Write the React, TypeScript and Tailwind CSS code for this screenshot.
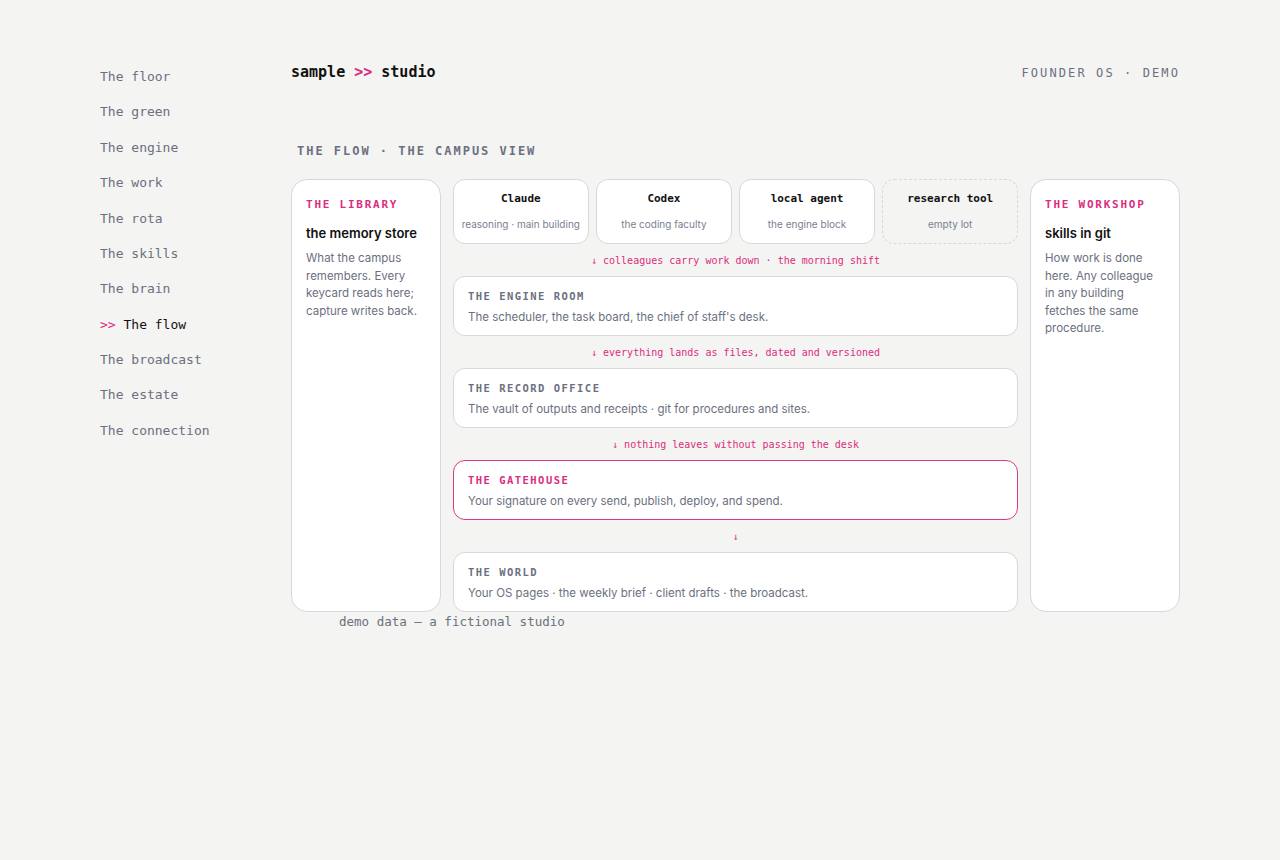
import React from "react";

const mono = "font-['DejaVu_Sans_Mono','Liberation_Mono',monospace]";
const sans = "font-['Inter','Noto_Sans',sans-serif]";

const nav = [
  "The floor",
  "The green",
  "The engine",
  "The work",
  "The rota",
  "The skills",
  "The brain",
  "The flow",
  "The broadcast",
  "The estate",
  "The connection",
];

const colleagues = [
  { name: "Claude", note: "reasoning · main building" },
  { name: "Codex", note: "the coding faculty" },
  { name: "local agent", note: "the engine block" },
  { name: "research tool", note: "empty lot", empty: true },
];

function Arrow({ text }: { text: string }) {
  return (
    <div className={`h-[32px] flex items-center justify-center text-[10px] text-[#db2d7f] ${mono}`}>
      {text}
    </div>
  );
}

function Floor({ title, body, gate }: { title: string; body: string; gate?: boolean }) {
  return (
    <div
      className={`h-[60px] rounded-[12px] bg-white border px-[14px] pt-[12px] ${
        gate ? "border-[#d63c86]" : "border-[#d7d8de]"
      }`}
    >
      <div
        className={`text-[10.5px] font-bold tracking-[0.14em] leading-[14px] ${mono} ${
          gate ? "text-[#db2d7f]" : "text-[#6b7080]"
        }`}
      >
        {title}
      </div>
      <div className={`mt-[6px] text-[11.5px] leading-[16px] text-[#6b7080] ${sans}`}>{body}</div>
    </div>
  );
}

function Side({ label, title, body }: { label: string; title: string; body: string }) {
  return (
    <div className="w-[150px] shrink-0 rounded-[16px] bg-white border border-[#d7d8de] px-[14px] pt-[18px]">
      <div className={`text-[11px] font-bold tracking-[0.16em] leading-[14px] text-[#db2d7f] ${mono}`}>{label}</div>
      <div className={`mt-[13px] text-[13px] font-semibold leading-[16px] text-[#111] ${sans}`}>{title}</div>
      <div className={`mt-[9px] text-[11.5px] leading-[17.5px] text-[#6b7080] ${sans}`}>{body}</div>
    </div>
  );
}

export default function App() {
  return (
    <div className="min-h-[860px] w-full bg-[#f4f4f2] flex pl-[100px] pr-[100px]">
      <nav className={`w-[191px] shrink-0 pt-[59px] flex flex-col text-[13px] ${mono}`}>
        {nav.map((n) => (
          <div key={n} className="h-[35.4px] flex items-center">
            {n === "The flow" ? (
              <span className="text-[#111]">
                <span className="text-[#db2d7f]">&gt;&gt;</span> {n}
              </span>
            ) : (
              <span className="text-[#6b7080]">{n}</span>
            )}
          </div>
        ))}
      </nav>

      <main className="flex-1 pt-[61px]">
        <header className="flex items-center justify-between h-[22px]">
          <div className={`text-[15px] font-bold text-[#111] ${mono}`}>
            sample <span className="text-[#db2d7f]">&gt;&gt;</span> studio
          </div>
          <div className={`text-[12px] tracking-[0.175em] text-[#6b7080] mt-[1px] ${mono}`}>
            FOUNDER OS · DEMO
          </div>
        </header>

        <div className={`mt-[60px] pl-[6px] text-[12px] font-bold tracking-[0.165em] text-[#6b7080] leading-[16px] ${mono}`}>
          THE FLOW · THE CAMPUS VIEW
        </div>

        <div className="mt-[20px] flex gap-[12px]">
          <Side
            label="THE LIBRARY"
            title="the memory store"
            body="What the campus remembers. Every keycard reads here; capture writes back."
          />

          <div className="flex-1 flex flex-col">
            <div className="grid grid-cols-4 gap-[7.5px]">
              {colleagues.map((c) => (
                <div
                  key={c.name}
                  className={`h-[65px] rounded-[12px] flex flex-col items-center pt-[12px] ${
                    c.empty ? "border border-dashed border-[#d7d8de]" : "bg-white border border-[#d7d8de]"
                  }`}
                >
                  <div className={`text-[11px] font-bold leading-[14px] text-[#111] ${mono}`}>{c.name}</div>
                  <div className={`mt-[11px] text-[10px] leading-[14px] text-[#7b8090] ${sans}`}>{c.note}</div>
                </div>
              ))}
            </div>
            <Arrow text="↓ colleagues carry work down · the morning shift" />
            <Floor title="THE ENGINE ROOM" body="The scheduler, the task board, the chief of staff's desk." />
            <Arrow text="↓ everything lands as files, dated and versioned" />
            <Floor title="THE RECORD OFFICE" body="The vault of outputs and receipts · git for procedures and sites." />
            <Arrow text="↓ nothing leaves without passing the desk" />
            <Floor gate title="THE GATEHOUSE" body="Your signature on every send, publish, deploy, and spend." />
            <Arrow text="↓" />
            <Floor title="THE WORLD" body="Your OS pages · the weekly brief · client drafts · the broadcast." />
          </div>

          <Side
            label="THE WORKSHOP"
            title="skills in git"
            body="How work is done here. Any colleague in any building fetches the same procedure."
          />
        </div>

        <div className={`ml-[48px] mt-[1px] text-[12.5px] leading-[18px] text-[#6b7080] ${mono}`}>
          demo data — a fictional studio
        </div>
      </main>
    </div>
  );
}
